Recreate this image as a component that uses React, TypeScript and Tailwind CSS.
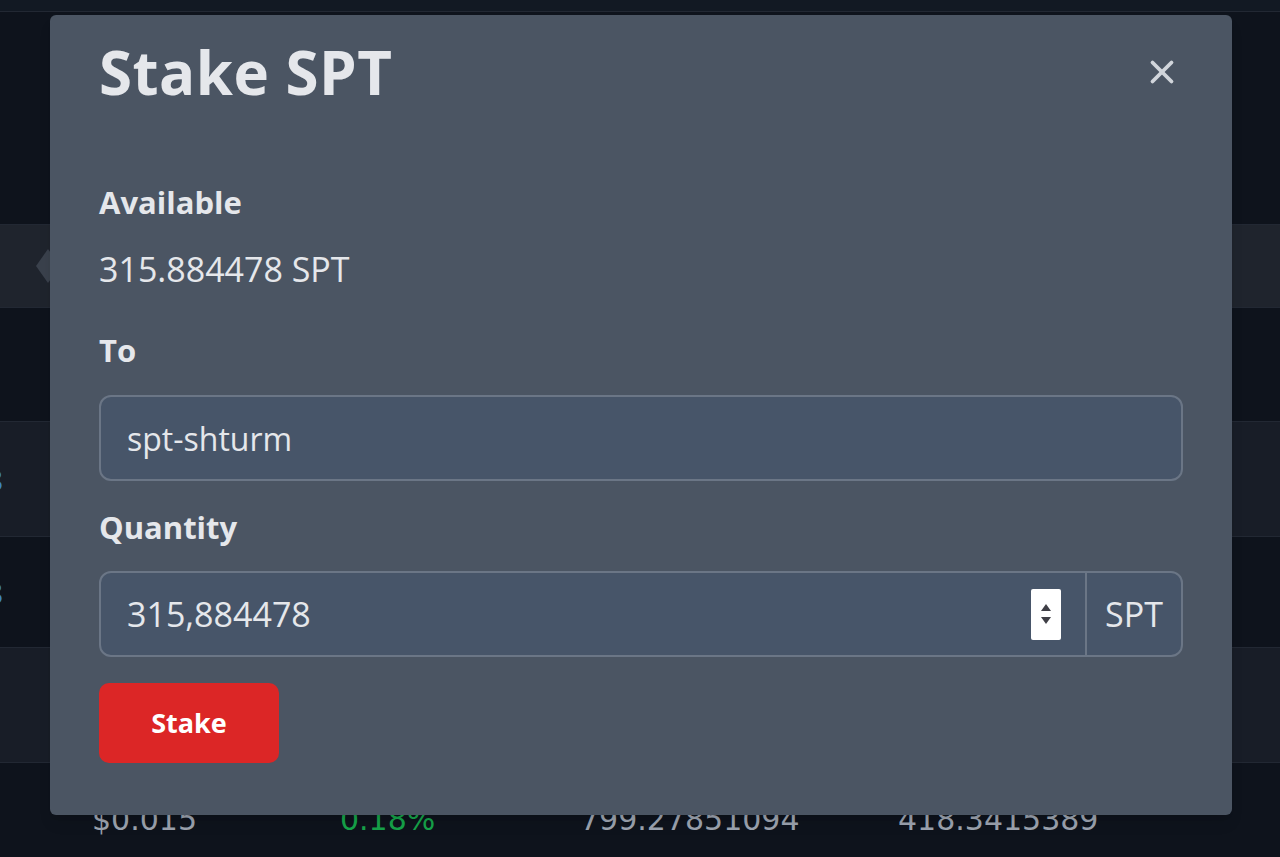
import React, { useState } from 'react';
import { X } from 'lucide-react';

// ── background rows of the token table (behind the modal) ──
const rows = [
  { h: 'h-[12px]', bg: 'bg-[#121923]' },
  { h: 'h-[213px]', bg: 'bg-[#0e131c]' },
  { h: 'h-[83px]', bg: 'bg-[#1f242d]', icon: true },
  { h: 'h-[114px]', bg: 'bg-[#0e131c]' },
  { h: 'h-[115px]', bg: 'bg-[#181d27]', digit: true },
  { h: 'h-[111px]', bg: 'bg-[#0e131c]', digit: true },
  { h: 'h-[115px]', bg: 'bg-[#181d27]' },
];

function Spinner() {
  return (
    <div className="flex flex-col items-center justify-center gap-[6px] w-[30px] h-[51px] bg-white rounded-[2px]">
      <svg width="10" height="7" viewBox="0 0 10 7"><path d="M5 0 L10 7 L0 7 Z" fill="#3f3f46" /></svg>
      <svg width="10" height="7" viewBox="0 0 10 7"><path d="M0 0 L10 0 L5 7 Z" fill="#3f3f46" /></svg>
    </div>
  );
}

export default function App() {
  const [to, setTo] = useState('spt-shturm');
  const [qty, setQty] = useState('315,884478');

  return (
    <div className="relative w-[1280px] h-[857px] overflow-hidden bg-[#0e131c]" style={{ fontFamily: "'Open Sans', 'Noto Sans', sans-serif" }}>
      {/* ── page behind ── */}
      <div className="flex flex-col">
        {rows.map((r, i) => (
          <div key={i} className={`${r.h} ${r.bg} border-b border-[#222833] flex items-center`}>
            {r.digit && <span className="text-[30px] text-[#3b82c4] -ml-[14px]">8</span>}
            {r.icon && (
              <svg width="24" height="34" viewBox="0 0 24 34" className="ml-[36px]">
                <path d="M12 0 L24 17 L12 34 L0 17 Z" fill="#3a414c" />
              </svg>
            )}
          </div>
        ))}
        <div className="h-[94px] flex items-start pt-[42px] text-[30px] leading-none text-[#9ca3af]" style={{ fontFamily: "'DejaVu Sans', sans-serif" }}>
          <span className="ml-[92px] w-[248px]">$0.015</span>
          <span className="w-[240px] text-[#16a34a]">0.18%</span>
          <span className="w-[318px]">799.27851094</span>
          <span>418.3415389</span>
        </div>
      </div>

      {/* ── STAKE MODAL ── */}
      <div className="absolute left-[50px] top-[15px] w-[1182px] h-[800px] rounded-[6px] bg-[#4b5563] px-[49px] text-[#e5e7eb] shadow-lg">
        <div className="flex items-center justify-between h-[118px] pb-[4px]">
          <h1 className="text-[60px] font-bold leading-none tracking-[0.5px]">Stake SPT</h1>
          <X size={38} strokeWidth={2.4} className="text-[#d1d5db] mr-[2px]" />
        </div>

        <div className="mt-[49px] text-[31px] font-bold leading-[40px]">Available</div>
        <div className="mt-[27px] text-[34px] leading-[40px]">315.884478 SPT</div>

        <div className="mt-[41px] text-[31px] font-bold leading-[40px]">To</div>
        <input
          value={to}
          onChange={(e) => setTo(e.target.value)}
          className="mt-[25px] block w-full h-[86px] rounded-[12px] border-2 border-[#6b7686] bg-[#475569] px-[26px] text-[32px] text-[#e5e7eb] outline-none"
        />

        <div className="mt-[26px] text-[31px] font-bold leading-[40px]">Quantity</div>
        <div className="mt-[24px] flex h-[86px] w-full rounded-[12px] border-2 border-[#6b7686] bg-[#475569]">
          <div className="flex-1 flex items-center pl-[26px] pr-[24px]">
            <input
              value={qty}
              onChange={(e) => setQty(e.target.value)}
              className="flex-1 bg-transparent text-[34px] text-[#e5e7eb] outline-none"
            />
            <Spinner />
          </div>
          <div className="w-[96px] border-l-2 border-[#6b7686] flex items-center justify-center text-[34px]">SPT</div>
        </div>

        <button className="mt-[26px] w-[180px] h-[80px] rounded-[10px] bg-[#dc2626] text-white text-[27px] font-bold">
          Stake
        </button>
      </div>
    </div>
  );
}
